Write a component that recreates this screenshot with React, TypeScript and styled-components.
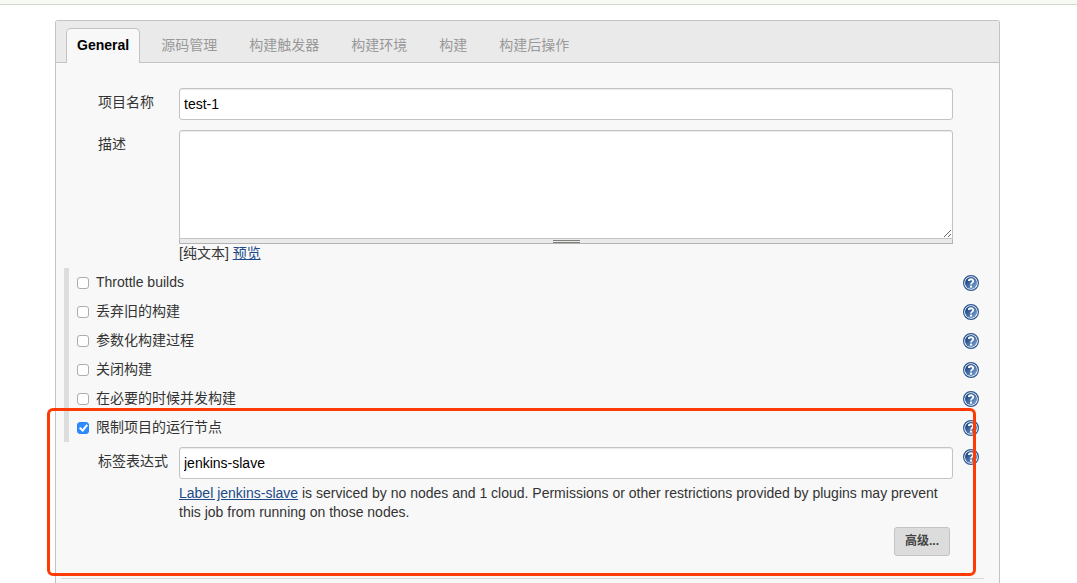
import React, { useState } from "react";
import styled, { createGlobalStyle } from "styled-components";

const GlobalStyle = createGlobalStyle`
  *, *::before, *::after { box-sizing: border-box; }
  body {
    margin: 0;
    background: #fff;
    color: #333;
    font: 14px/19px "Liberation Sans", Helvetica, Arial, "Noto Sans CJK SC", sans-serif;
  }
  button, input, textarea { font: inherit; }
`;

const Page = styled.div`
  display: flex;
  flex-direction: column;
  min-height: 100vh;
`;

const TopBar = styled.header`
  height: 5px;
  margin-bottom: 15px;
  background: #f6faf2;
  border-bottom: 1px solid #d3d7cf;
`;

const Panel = styled.main`
  flex: 1;
  margin: 0 77px 0 55px;
  background: #f8f8f8;
  border: 1px solid #c3c3c3;
  border-bottom: 0;
  border-radius: 3px 3px 0 0;
`;

const TabBar = styled.nav`
  display: flex;
  align-items: flex-end;
  gap: 10px;
  height: 42px;
  padding: 0 10px;
  background: #eaeaea;
  border-bottom: 1px solid #c3c3c3;
`;

const Tab = styled.button<{ $active: boolean }>`
  height: 35px;
  margin-bottom: -1px;
  padding: 0 10px 2px;
  border: 1px solid ${(p) => (p.$active ? "#c3c3c3" : "transparent")};
  border-bottom: 0;
  border-radius: 5px 5px 0 0;
  background: ${(p) => (p.$active ? "#f8f8f8" : "transparent")};
  color: ${(p) => (p.$active ? "#000" : "#999")};
  font-weight: ${(p) => (p.$active ? "bold" : "normal")};
  cursor: pointer;
`;

const Form = styled.form`
  padding-top: 25px;
`;

const HelpButton = styled.button`
  display: block;
  width: 16px;
  height: 16px;
  margin: 1px 0 0 auto;
  padding: 0;
  border: 0;
  background: none;
  cursor: pointer;

  svg { display: block; }
`;

const Field = styled.div`
  display: grid;
  grid-template-columns: 81px minmax(0, 1fr) 26px;
  padding: 0 20px 0 42px;
  margin-bottom: 10px;

  > ${HelpButton} { margin-top: 2px; }
`;

const FieldLabel = styled.label`
  padding-top: 5px;
`;

const TextInput = styled.input`
  display: block;
  width: 100%;
  height: 32px;
  padding: 0 4px;
  border: 1px solid #c3c3c3;
  border-radius: 3px;
  background: #fff;
  box-shadow: inset 0 1px 1px rgba(0, 0, 0, 0.08);
  color: #000;
  outline: none;
`;

const TextArea = styled.textarea`
  display: block;
  width: 100%;
  height: 109px;
  padding: 4px;
  border: 1px solid #c3c3c3;
  border-radius: 3px 3px 0 0;
  background: #fff;
  box-shadow: inset 0 1px 1px rgba(0, 0, 0, 0.08);
  color: #000;
  outline: none;
  resize: vertical;
`;

const DragHandle = styled.div`
  display: flex;
  justify-content: center;
  align-items: center;
  height: 5px;
  border: 1px solid #b3b3b3;
  border-top: 0;
  background: #eaeaea;

  &::before {
    content: "";
    width: 27px;
    height: 3px;
    border: solid #7d807a;
    border-width: 1px 0;
  }
`;

const Link = styled.a`
  color: #204a87;
  text-decoration: underline;
`;

const Preview = styled.div`
  margin-bottom: -5px;
`;

const OptionRow = styled.div`
  display: flex;
  align-items: center;
  height: 29px;
  margin-left: 8px;
  padding: 0 20px 0 8px;
  border-left: 5px solid #ddd;
`;

const OptionLabel = styled.label`
  flex: 1;
  padding-left: 7px;
`;

const Checkbox = styled.input`
  appearance: none;
  display: grid;
  place-items: center;
  width: 12px;
  height: 12px;
  margin: 1px 0 0;
  border: 1px solid #adadad;
  border-radius: 3px;
  background: #fff;

  &:checked {
    border-color: #2a83f7;
    background: #2f8bff;
  }

  &:checked::before {
    content: "";
    width: 5px;
    height: 8px;
    margin-bottom: 2px;
    border: solid #fff;
    border-width: 0 2px 2px 0;
    transform: rotate(40deg);
  }
`;

const Highlight = styled.section`
  position: relative;
  padding-bottom: 22px;

  &::after {
    content: "";
    position: absolute;
    inset: -5px 23px 2px -9px;
    border: 3px solid #ff3b05;
    border-radius: 6px;
    pointer-events: none;
  }
`;

const NodeFields = styled.div`
  padding-top: 5px;
`;

const Message = styled.p`
  margin: 5px 0 -5px;
`;

const Actions = styled.div`
  display: flex;
  justify-content: flex-end;
  padding-right: 49px;
`;

const AdvancedButton = styled.button`
  height: 29px;
  padding: 0 10px;
  border: 1px solid #c3c3c3;
  border-radius: 3px;
  background: #dcdcdc;
  color: #444;
  font-size: 12px;
  font-weight: bold;
  cursor: pointer;
`;

const Divider = styled.hr`
  margin: 0 15px 0 5px;
  border: 0;
  border-top: 1px solid #d8d8d8;
`;

function Help({ topic }: { topic: string }) {
  return (
    <HelpButton type="button" aria-label={`帮助: ${topic}`}>
      <svg width="16" height="16" viewBox="0 0 16 16" aria-hidden="true">
        <defs>
          <linearGradient id="help-fill" x1="0" y1="0" x2="1" y2="1">
            <stop offset="0.2" stopColor="#204a87" />
            <stop offset="1" stopColor="#86abd9" />
          </linearGradient>
        </defs>
        <circle cx="8" cy="8" r="7.4" fill="#fff" stroke="#2d5590" strokeWidth="1.2" />
        <circle cx="8" cy="8" r="6" fill="url(#help-fill)" />
        <path
          d="M5.8 6.1C5.8 3.7 10.3 3.6 10.3 6.1C10.3 7.7 8 7.6 8 9.5"
          fill="none"
          stroke="#fff"
          strokeWidth="1.8"
        />
        <rect x="7" y="10.6" width="2" height="2" fill="#fff" />
      </svg>
    </HelpButton>
  );
}

function Option({ id, label, checked = false }: { id: string; label: string; checked?: boolean }) {
  return (
    <OptionRow>
      <Checkbox type="checkbox" id={id} defaultChecked={checked} />
      <OptionLabel htmlFor={id}>{label}</OptionLabel>
      <Help topic={label} />
    </OptionRow>
  );
}

const tabs = ["General", "源码管理", "构建触发器", "构建环境", "构建", "构建后操作"];

const options = [
  { id: "throttle", label: "Throttle builds" },
  { id: "discard", label: "丢弃旧的构建" },
  { id: "params", label: "参数化构建过程" },
  { id: "disable", label: "关闭构建" },
  { id: "concurrent", label: "在必要的时候并发构建" },
];

export default function App() {
  const [active, setActive] = useState(tabs[0]);
  return (
    <>
      <GlobalStyle />
      <Page>
        <TopBar />
        <Panel>
          <TabBar>
            {tabs.map((tab) => (
              <Tab key={tab} type="button" $active={tab === active} onClick={() => setActive(tab)}>
                {tab}
              </Tab>
            ))}
          </TabBar>
          <Form onSubmit={(e) => e.preventDefault()}>
            <Field>
              <FieldLabel htmlFor="name">项目名称</FieldLabel>
              <TextInput id="name" defaultValue="test-1" />
            </Field>
            <Field>
              <FieldLabel htmlFor="description">描述</FieldLabel>
              <div>
                <TextArea id="description" />
                <DragHandle />
                <Preview>
                  [纯文本] <Link href="#preview">预览</Link>
                </Preview>
              </div>
            </Field>
            {options.map((o) => (
              <Option key={o.id} {...o} />
            ))}
            <Highlight>
              <Option id="restrict" label="限制项目的运行节点" checked />
              <NodeFields>
                <Field>
                  <FieldLabel htmlFor="expression">标签表达式</FieldLabel>
                  <div>
                    <TextInput id="expression" defaultValue="jenkins-slave" />
                    <Message>
                      <Link href="#label">Label jenkins-slave</Link> is serviced by no nodes and 1 cloud.
                      Permissions or other restrictions provided by plugins may prevent this job from
                      running on those nodes.
                    </Message>
                  </div>
                  <Help topic="标签表达式" />
                </Field>
                <Actions>
                  <AdvancedButton type="button">高级...</AdvancedButton>
                </Actions>
              </NodeFields>
            </Highlight>
            <Divider />
          </Form>
        </Panel>
      </Page>
    </>
  );
}
